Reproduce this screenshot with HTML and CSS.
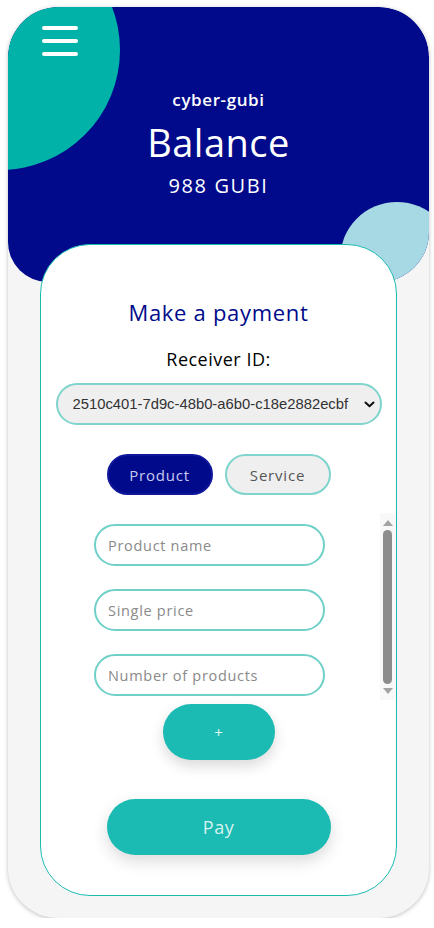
FILE: index.html
```html
<!DOCTYPE html>
<html lang="en">
<head>
<meta charset="utf-8">
<title>cyber-gubi</title>
<link rel="stylesheet" href="styles.css">
</head>
<body>
<div class="phone">
  <header class="header">
    <div class="blob-teal"></div>
    <div class="blob-light"></div>
    <button class="menu" aria-label="Menu">
      <span></span><span></span><span></span>
    </button>
    <div class="user">cyber-gubi</div>
    <h1 class="title">Balance</h1>
    <div class="amount">988 GUBI</div>
  </header>
  <main class="card">
    <h2 class="card-title">Make a payment</h2>
    <label class="label" for="receiver">Receiver ID:</label>
    <div class="select-wrap">
      <select id="receiver" class="select">
        <option>2510c401-7d9c-48b0-a6b0-c18e2882ecbf</option>
      </select>
      <svg class="chev" width="11" height="7" viewBox="0 0 11 7"><path d="M1.5 1.5 L5.5 5.2 L9.5 1.5" fill="none" stroke="#111" stroke-width="2" stroke-linecap="round" stroke-linejoin="round"/></svg>
    </div>
    <div class="toggle">
      <button class="pill active">Product</button>
      <button class="pill">Service</button>
    </div>
    <div class="scroll">
      <div class="fields">
        <input class="field" type="text" placeholder="Product name">
        <input class="field" type="text" placeholder="Single price">
        <input class="field" type="text" placeholder="Number of products">
      </div>
      <div class="bar">
        <svg class="arrow" width="10" height="6" viewBox="0 0 10 6"><path d="M0 6 L5 0 L10 6 Z" fill="#a3a3a3"/></svg>
        <div class="thumb"></div>
        <svg class="arrow" width="10" height="6" viewBox="0 0 10 6"><path d="M0 0 L5 6 L10 0 Z" fill="#a3a3a3"/></svg>
      </div>
    </div>
    <button class="plus">+</button>
    <button class="pay">Pay</button>
  </main>
</div>
</body>
</html>
```

FILE: styles.css
```css
* { box-sizing: border-box; }
html, body { margin: 0; padding: 0; background: #ffffff; }
body { font-family: "Open Sans", "Noto Sans", sans-serif; }

.phone {
  position: relative;
  margin: 7px 0 0 8px;
  width: 421px;
  height: 911px;
  border-radius: 50px;
  background: #f5f5f5;
  box-shadow: 0 1px 4px rgba(0,0,0,0.25);
  overflow: hidden;
}

.header {
  position: relative;
  height: 275px;
  background: #000a8a;
  border-radius: 50px 50px 50px 40px;
  overflow: hidden;
  display: flex;
  flex-direction: column;
  align-items: center;
  color: #ffffff;
}
.blob-teal {
  position: absolute;
  left: -128px;
  top: -77px;
  width: 240px;
  height: 240px;
  border-radius: 50%;
  background: #00b2a8;
}
.blob-light {
  position: absolute;
  left: 332px;
  top: 195px;
  width: 114px;
  height: 114px;
  border-radius: 50%;
  background: #a6d9e4;
}
.menu {
  position: relative;
  z-index: 2;
  align-self: flex-start;
  margin: 19px 0 0 34px;
  padding: 0;
  width: 36px;
  height: 30px;
  border: 0;
  background: transparent;
  display: flex;
  flex-direction: column;
  justify-content: space-between;
}
.menu span {
  display: block;
  width: 36px;
  height: 4px;
  border-radius: 2px;
  background: #ffffff;
}
.user {
  position: relative;
  z-index: 2;
  margin-top: 33px;
  font-size: 17px;
  line-height: 22px;
  font-weight: 600;
  letter-spacing: 0.6px;
}
.title {
  margin: 9px 0 0 0;
  font-size: 38px;
  line-height: 44px;
  font-weight: 500;
  letter-spacing: 0.5px;
}
.amount {
  margin-top: 9px;
  font-size: 20px;
  line-height: 26px;
  font-weight: 400;
  letter-spacing: 1.6px;
}

.card {
  position: relative;
  z-index: 3;
  margin: -38px 0 0 32px;
  width: 357px;
  height: 652px;
  background: #ffffff;
  border: 1px solid #1bbab0;
  border-radius: 50px;
  display: flex;
  flex-direction: column;
  align-items: center;
  padding-top: 53px;
}
.card-title {
  margin: 0;
  font-size: 22px;
  line-height: 28px;
  font-weight: 500;
  letter-spacing: 0.7px;
  color: #000a8a;
}
.label {
  margin-top: 22px;
  font-size: 18px;
  line-height: 22px;
  font-weight: 500;
  letter-spacing: 0.5px;
  color: #000000;
}
.select-wrap {
  margin-top: 13px;
  width: 326px;
  height: 42px;
  border: 2px solid #7fd4cd;
  border-radius: 21px;
  background: #efefef;
  display: flex;
  align-items: center;
  padding: 0 5px 0 15px;
}
.select {
  flex: 1;
  min-width: 0;
  appearance: none;
  -webkit-appearance: none;
  border: 0;
  background: transparent;
  font-family: "Liberation Sans", Arial, sans-serif;
  font-size: 14.8px;
  color: #333333;
  padding: 0;
  outline: none;
}
.chev { flex: none; }

.toggle {
  margin-top: 29px;
  display: flex;
  gap: 12px;
}
.pill {
  width: 106px;
  height: 41px;
  border-radius: 21px;
  font-family: "Open Sans", "Noto Sans", sans-serif;
  font-size: 15px;
  font-weight: 500;
  letter-spacing: 0.8px;
  border: 2px solid #7fd4cd;
  background: #efefef;
  color: #555555;
  padding: 0;
}
.pill.active {
  background: #000a8a;
  border-color: #10179a;
  color: #c9caf0;
}

.scroll {
  margin-top: 18px;
  align-self: stretch;
  height: 187px;
  display: flex;
}
.fields {
  flex: 1;
  display: flex;
  flex-direction: column;
  align-items: flex-start;
  padding: 11px 0 0 53px;
  gap: 23px;
  overflow: hidden;
}
.field {
  flex: none;
  width: 231px;
  height: 42px;
  border: 2px solid #6fd0c8;
  border-radius: 21px;
  background: #ffffff;
  padding: 0 12px;
  font-family: "Open Sans", "Noto Sans", sans-serif;
  font-size: 14.5px;
  letter-spacing: 0.7px;
  color: #333333;
  outline: none;
}
.field::placeholder { color: #8a8a8a; }
.bar {
  flex: none;
  width: 15px;
  margin-right: 1px;
  background: #f8f8f8;
  display: flex;
  flex-direction: column;
  align-items: center;
  padding: 7px 0 6px;
  gap: 4px;
}
.arrow { flex: none; }
.thumb {
  flex: 1;
  width: 9px;
  border-radius: 5px;
  background: #8c8c8c;
}

.plus {
  margin-top: 4px;
  width: 112px;
  height: 56px;
  border: 0;
  border-radius: 28px;
  background: #1bbab2;
  color: #e6f7f5;
  font-size: 15px;
  font-family: "Open Sans", "Noto Sans", sans-serif;
  box-shadow: 0 6px 14px rgba(0,0,0,0.15);
}
.pay {
  margin-top: 39px;
  width: 224px;
  height: 56px;
  border: 0;
  border-radius: 28px;
  background: #1bbab2;
  color: #d7f2ef;
  font-size: 18px;
  letter-spacing: 0.5px;
  font-family: "Open Sans", "Noto Sans", sans-serif;
  box-shadow: 0 6px 16px rgba(0,0,0,0.15);
}
```
